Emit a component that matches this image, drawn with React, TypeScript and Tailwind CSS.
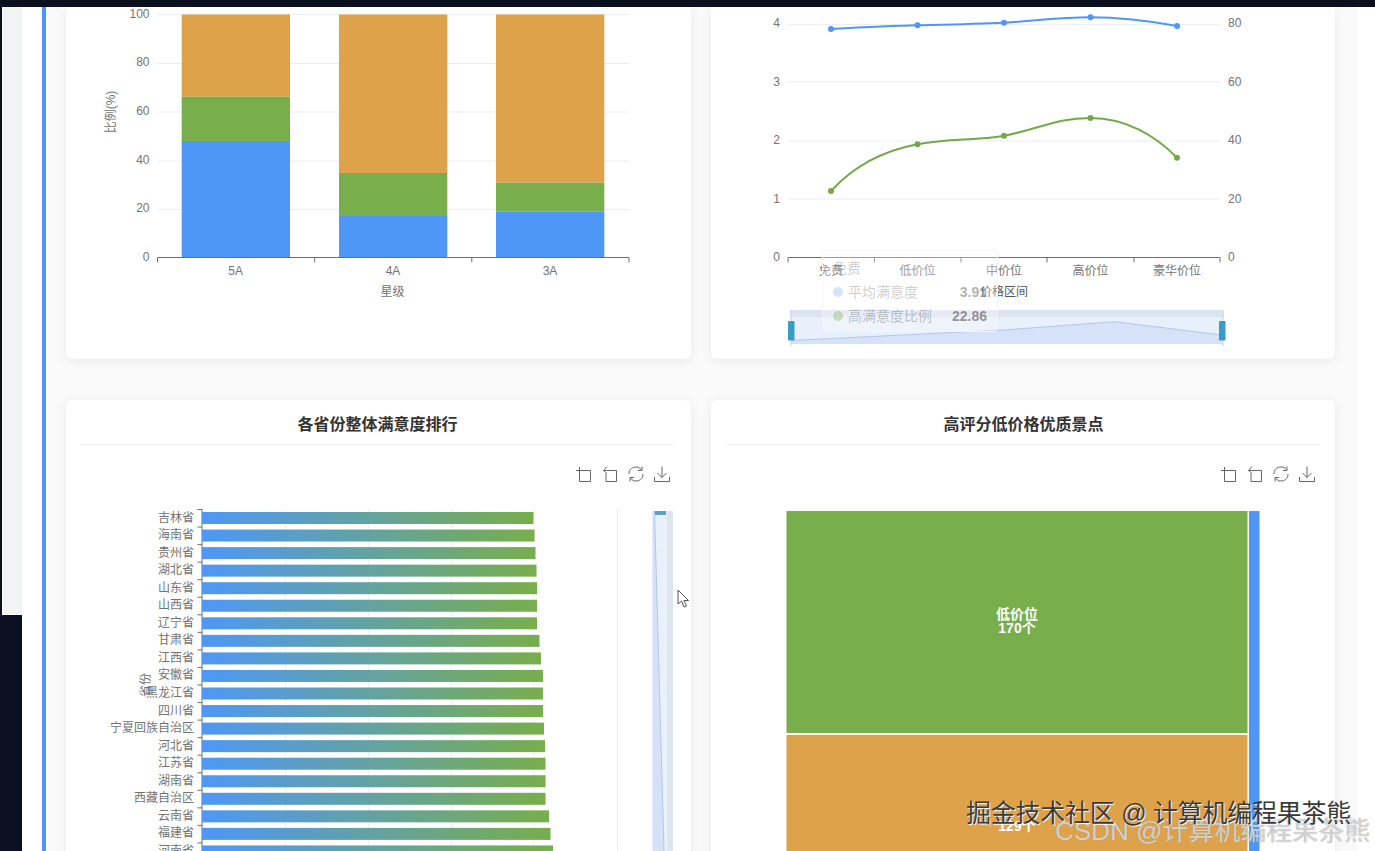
// Dashboard charts screen: star level, price range, province ranking, treemap

const BLUE = '#4e97f7'
const GREEN = '#78ae4b'
const ORANGE = '#dea24a'

const starBars = [
  { label: '5A', x: 181.7, blueTop: 141, greenTop: 96.7 },
  { label: '4A', x: 339, blueTop: 216, greenTop: 173 },
  { label: '3A', x: 496, blueTop: 211.7, greenTop: 182.7 },
]

const priceLabels = [
  { label: '免费', x: 831 },
  { label: '低价位', x: 917.5 },
  { label: '中价位', x: 1004 },
  { label: '高价位', x: 1090.5 },
  { label: '豪华价位', x: 1177 },
]

const blueDots = [29, 25.3, 22.7, 17.3, 26]
const greenDots = [191, 144.3, 135.7, 118, 157.7]

const provinces = [
  { name: '吉林省', end: 533.5 },
  { name: '海南省', end: 534.5 },
  { name: '贵州省', end: 535.5 },
  { name: '湖北省', end: 536.5 },
  { name: '山东省', end: 537 },
  { name: '山西省', end: 537 },
  { name: '辽宁省', end: 537 },
  { name: '甘肃省', end: 539.5 },
  { name: '江西省', end: 541 },
  { name: '安徽省', end: 543 },
  { name: '黑龙江省', end: 543 },
  { name: '四川省', end: 543 },
  { name: '宁夏回族自治区', end: 544 },
  { name: '河北省', end: 545 },
  { name: '江苏省', end: 545.5 },
  { name: '湖南省', end: 545.5 },
  { name: '西藏自治区', end: 545.5 },
  { name: '云南省', end: 549 },
  { name: '福建省', end: 550.5 },
  { name: '河南省', end: 553 },
]

// Toolbox icons at the top right of a chart
function Toolbox() {
  return (
    <div className="flex justify-end gap-[10px] pt-[21px] pr-[3px] mb-[2px]">
      <svg viewBox="0 0 16 16" className="w-4 h-4 fill-none stroke-[#666]">
        <path d="M0 4.5H14.5V15.5H3.5V1" />
      </svg>
      <svg viewBox="0 0 16 16" className="w-4 h-4 fill-none stroke-[#666]">
        <path d="M5 0.5L1.5 4.5L5 7.5M1.5 4.5H14.5V15.5H4V7.5" />
      </svg>
      <svg viewBox="0 0 16 16" className="w-4 h-4 fill-none stroke-[#666]">
        <path d="M1 8A7 7 0 0 1 13.5 3.5M14 0.5V4.5H10" />
        <path d="M15 8A7 7 0 0 1 2.5 12.5M2 15.5V11.5H6" />
      </svg>
      <svg viewBox="0 0 16 16" className="w-4 h-4 fill-none stroke-[#666]">
        <path d="M8 0.5V11.5M3.5 7L8 11.5L12.5 7M0.5 11V15.5H15.5V11" />
      </svg>
    </div>
  )
}

// Title row shared by the lower cards
function CardTitle({ title }: { title: string }) {
  return (
    <div className="pt-4 pb-[10px] h-[45px] border-b border-[#f0f0f0] text-center text-[16px] leading-[18px] font-bold text-[#333]">
      {title}
    </div>
  )
}

function StarChart() {
  return (
    <svg viewBox="66 7 625 352" className="block w-[625px] h-[352px]">
      {[14.5, 63.5, 112, 161, 209.5].map((y) => (
        <line key={y} x1="157.5" x2="629" y1={y} y2={y} stroke="#e9ecef" />
      ))}
      {starBars.map((bar) => (
        <g key={bar.label}>
          <rect x={bar.x} y="14.5" width="108.3" height={bar.greenTop - 14.5} fill={ORANGE} />
          <rect x={bar.x} y={bar.greenTop} width="108.3" height={bar.blueTop - bar.greenTop} fill={GREEN} />
          <rect x={bar.x} y={bar.blueTop} width="108.3" height={257.7 - bar.blueTop} fill={BLUE} />
          <text x={bar.x + 54} y="270.5" textAnchor="middle" dominantBaseline="central" className="text-[12px] fill-[#737373]">
            {bar.label}
          </text>
        </g>
      ))}
      <path d="M157.5 262.5V257.5H629V262.5M314.7 257.5V262.5M471.8 257.5V262.5" fill="none" stroke="#6e6e6e" />
      {[
        { v: '100', y: 13.5 },
        { v: '80', y: 62 },
        { v: '60', y: 110.5 },
        { v: '40', y: 159.5 },
        { v: '20', y: 208 },
        { v: '0', y: 256.5 },
      ].map((t) => (
        <text key={t.v} x="149.5" y={t.y} textAnchor="end" dominantBaseline="central" className="text-[12px] fill-[#737373]">
          {t.v}
        </text>
      ))}
      <text x="111" y="112" textAnchor="middle" dominantBaseline="central" transform="rotate(-90 111 112)" className="text-[12px] fill-[#737373]">
        比例(%)
      </text>
      <text x="392.6" y="292" textAnchor="middle" dominantBaseline="central" className="text-[12px] fill-[#737373]">
        星级
      </text>
    </svg>
  )
}

function PriceChart() {
  return (
    <svg viewBox="711 7 624 352" className="block w-[624px] h-[352px]">
      {[24.3, 82, 141, 199].map((y) => (
        <line key={y} x1="788" x2="1220" y1={y} y2={y} stroke="#e9ecef" />
      ))}
      <path d="M788 262.5V257.5H1220V262.5M874.4 257.5V262.5M961 257.5V262.5M1047 257.5V262.5M1134 257.5V262.5" fill="none" stroke="#6e6e6e" />
      {[
        { l: '4', r: '80', y: 23 },
        { l: '3', r: '60', y: 81.5 },
        { l: '2', r: '40', y: 140 },
        { l: '1', r: '20', y: 198.5 },
        { l: '0', r: '0', y: 256.5 },
      ].map((t) => (
        <g key={t.l}>
          <text x="780" y={t.y} textAnchor="end" dominantBaseline="central" className="text-[12px] fill-[#737373]">
            {t.l}
          </text>
          <text x="1228" y={t.y} dominantBaseline="central" className="text-[12px] fill-[#737373]">
            {t.r}
          </text>
        </g>
      ))}
      <path
        d="M831 29C860 27.5 890 26 917.5 25.3C950 24.5 975 24 1004 22.7C1040 20.5 1060 17.3 1090.5 17.3C1125 17.3 1150 21 1177 26"
        fill="none"
        stroke={BLUE}
        strokeWidth="2"
      />
      <path
        d="M831 191C852 168 882 151 917.5 144.3C950 138 975 141 1004 135.7C1040 129 1055 118 1090.5 118C1125 118 1155 135 1177 157.7"
        fill="none"
        stroke="#74a94a"
        strokeWidth="2"
      />
      {priceLabels.map((p, i) => (
        <g key={p.label}>
          <circle cx={p.x} cy={blueDots[i]} r="3" fill={BLUE} />
          <circle cx={p.x} cy={greenDots[i]} r="3" fill="#74a94a" />
          <text x={p.x} y="270.5" textAnchor="middle" dominantBaseline="central" className="text-[12px] fill-[#737373]">
            {p.label}
          </text>
        </g>
      ))}
      <text x="1004" y="292" textAnchor="middle" dominantBaseline="central" className="text-[12px] fill-[#555]">
        价格区间
      </text>
      {/* Range slider under the axis */}
      <rect x="790.5" y="310" width="433" height="34" fill="#e8f0fb" />
      <rect x="790.5" y="310" width="433" height="7" fill="#dde3ee" />
      <path d="M791 340.5L1003 330L1115 321.7L1222 335V344H791Z" fill="#d6e2f7" stroke="none" />
      <path d="M791 340.5L1003 330L1115 321.7L1222 335" fill="none" stroke="#b4c7ea" />
      <path d="M791 310V346M1223 310V346" stroke="#c9d3e3" />
      <rect x="788" y="321" width="6.5" height="19.5" rx="1" fill="#3a9cc0" />
      <rect x="1219" y="321" width="6.5" height="19.5" rx="1" fill="#3a9cc0" />
    </svg>
  )
}

// Fading tooltip that floats over the price chart
function PriceTooltip() {
  return (
    <div className="absolute left-[111px] top-[243px] w-[176px] h-[82px] bg-white/30 border border-[#f4f4f4] rounded pt-[5px] px-[10px] text-[14px] leading-[24px]">
      <div className="text-[#333]/25">免费</div>
      <div className="flex items-center text-[#333]/25">
        <span className="w-[10px] h-[10px] rounded-full bg-[#4e97f7]/25 mr-[5px]" />
        <span className="flex-1">平均满意度</span>
        <span className="font-bold text-[#333]/40">3.91</span>
      </div>
      <div className="flex items-center text-[#333]/30">
        <span className="w-[10px] h-[10px] rounded-full bg-[#78ae4b]/35 mr-[5px]" />
        <span className="flex-1">高满意度比例</span>
        <span className="font-bold text-[#333]/50">22.86</span>
      </div>
    </div>
  )
}

function ProvinceChart() {
  return (
    <svg viewBox="66 484 625 367" className="block w-[625px] h-[367px]">
      <defs>
        <linearGradient id="provinceBar" x1="0" x2="1" y1="0" y2="0">
          <stop offset="0" stopColor={BLUE} />
          <stop offset="1" stopColor={GREEN} />
        </linearGradient>
      </defs>
      {[285.5, 368.5, 451.5, 534, 617.5].map((x) => (
        <line key={x} x1={x} x2={x} y1="509" y2="851" stroke="#eceef1" />
      ))}
      <line x1="202" x2="202" y1="509" y2="851" stroke="#6e6e6e" />
      {provinces.map((p, i) => (
        <g key={p.name}>
          <line x1="197.5" x2="202" y1={509.5 + i * 17.55} y2={509.5 + i * 17.55} stroke="#6e6e6e" />
          <rect x="202" y={512 + i * 17.55} width={p.end - 202} height="12" fill="url(#provinceBar)" />
          <text x="194" y={517.5 + i * 17.55} textAnchor="end" dominantBaseline="central" className="text-[12px] fill-[#737373]">
            {p.name}
          </text>
        </g>
      ))}
      <text x="146" y="685" textAnchor="middle" dominantBaseline="central" transform="rotate(-90 146 685)" className="text-[12px] fill-[#737373]">
        省份
      </text>
      {/* Vertical range slider */}
      <rect x="652.5" y="511" width="20.5" height="340" fill="#e8f0fa" />
      <rect x="667" y="511" width="6" height="340" fill="#dfe5ef" />
      <path d="M652.5 511H654.5L664 851H652.5Z" fill="#d5e1f5" />
      <path d="M654.5 511L664 851" fill="none" stroke="#b4c7ea" />
      <rect x="655" y="511" width="11" height="4" fill="#5aa3c0" />
      <path d="M669.5 685V686M669.5 688V689" stroke="#ffffff" />
    </svg>
  )
}

function QualityTreemap() {
  return (
    <svg viewBox="711 484 624 367" className="block w-[624px] h-[367px]">
      <rect x="786.5" y="511" width="461" height="222" fill={GREEN} />
      <rect x="786.5" y="735" width="461" height="116" fill={ORANGE} />
      <rect x="1249" y="511" width="10.5" height="340" fill={BLUE} />
      <text x="1017" y="614" textAnchor="middle" dominantBaseline="central" className="text-[14px] font-bold fill-white">
        低价位
      </text>
      <text x="1017" y="627.5" textAnchor="middle" dominantBaseline="central" className="text-[14px] font-bold fill-white">
        170个
      </text>
      <text x="1017" y="826" textAnchor="middle" dominantBaseline="central" className="text-[14px] font-bold fill-white">
        129个
      </text>
    </svg>
  )
}

export default function App() {
  return (
    <div className="relative w-full h-[851px] overflow-hidden bg-white flex flex-col font-['Liberation_Sans','Noto_Sans_CJK_SC',sans-serif]">
      {/* Dark strip at the top of the window */}
      <div className="h-[7px] shrink-0 bg-[#0b101e]" />

      <div className="flex flex-1 min-h-0">
        {/* Window behind, on the left */}
        <div className="w-[22px] shrink-0 flex flex-col bg-[#0b1120]">
          <div className="h-[608px] ml-[2px] bg-[#f2f3f3] border-l border-b border-white" />
        </div>
        <div className="w-[20px] shrink-0 bg-white" />
        <div className="w-1 shrink-0 bg-[#4e97f0]" />

        {/* Main dashboard */}
        <div className="w-[1311px] shrink-0 bg-[#fafafa] pl-5 overflow-hidden">
          <div className="grid grid-cols-[625px_624px] gap-x-5 gap-y-[41px]">
            <div className="bg-white rounded-b-md shadow-[0_2px_12px_rgba(0,0,0,0.07)]">
              <StarChart />
            </div>
            <div className="relative bg-white rounded-b-md shadow-[0_2px_12px_rgba(0,0,0,0.07)]">
              <PriceChart />
              <PriceTooltip />
            </div>
            <div className="bg-white rounded-t-md shadow-[0_2px_12px_rgba(0,0,0,0.07)] h-[460px]">
              <div className="ml-4 mr-[18px]">
                <CardTitle title="各省份整体满意度排行" />
                <Toolbox />
              </div>
              <ProvinceChart />
            </div>
            <div className="bg-white rounded-t-md shadow-[0_2px_12px_rgba(0,0,0,0.07)] h-[460px]">
              <div className="ml-4 mr-[15px]">
                <CardTitle title="高评分低价格优质景点" />
                <div className="pr-[2px]">
                  <Toolbox />
                </div>
              </div>
              <QualityTreemap />
            </div>
          </div>
        </div>
      </div>

      {/* Mouse cursor */}
      <svg viewBox="0 0 14 20" className="absolute left-[677px] top-[589px] w-[14px] h-5">
        <path d="M1 1V15L4.5 12L7 18L9.5 17L7 11.5H11.5Z" fill="#fff" stroke="#555" />
      </svg>

      {/* Watermarks burned into the screenshot */}
      <div className="absolute left-[1055px] top-[813px] whitespace-nowrap text-[26px] leading-[36px] text-white/60 [text-shadow:0_0_1px_#888]">
        CSDN @计算机编程果茶熊
      </div>
      <div className="absolute left-[966px] top-[795px] whitespace-nowrap text-[25px] leading-[36px] tracking-[-0.25px] text-[#3a3a3a] [text-shadow:1px_1px_1px_#fff]">
        掘金技术社区 @ 计算机编程果茶熊
      </div>
    </div>
  )
}
